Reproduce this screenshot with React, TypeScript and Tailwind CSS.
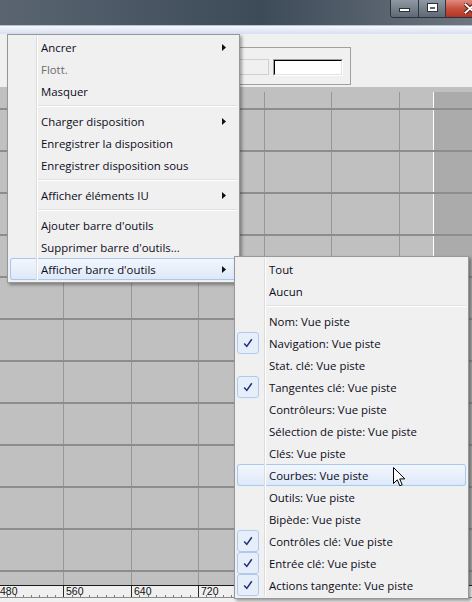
import React from 'react';

type MenuItem =
  | { kind: 'item'; label: string; arrow?: boolean; disabled?: boolean; checked?: boolean; hover?: boolean }
  | { kind: 'sep' };

const mainItems: MenuItem[] = [
  { kind: 'item', label: 'Ancrer', arrow: true },
  { kind: 'item', label: 'Flott.', disabled: true },
  { kind: 'item', label: 'Masquer' },
  { kind: 'sep' },
  { kind: 'item', label: 'Charger disposition', arrow: true },
  { kind: 'item', label: 'Enregistrer la disposition' },
  { kind: 'item', label: 'Enregistrer disposition sous' },
  { kind: 'sep' },
  { kind: 'item', label: 'Afficher éléments IU', arrow: true },
  { kind: 'sep' },
  { kind: 'item', label: "Ajouter barre d'outils" },
  { kind: 'item', label: "Supprimer barre d'outils..." },
  { kind: 'item', label: "Afficher barre d'outils", arrow: true, hover: true },
];

const subItems: MenuItem[] = [
  { kind: 'item', label: 'Tout' },
  { kind: 'item', label: 'Aucun' },
  { kind: 'sep' },
  { kind: 'item', label: 'Nom: Vue piste' },
  { kind: 'item', label: 'Navigation: Vue piste', checked: true },
  { kind: 'item', label: 'Stat. clé: Vue piste' },
  { kind: 'item', label: 'Tangentes clé: Vue piste', checked: true },
  { kind: 'item', label: 'Contrôleurs: Vue piste' },
  { kind: 'item', label: 'Sélection de piste: Vue piste' },
  { kind: 'item', label: 'Clés: Vue piste' },
  { kind: 'item', label: 'Courbes: Vue piste', hover: true },
  { kind: 'item', label: 'Outils: Vue piste' },
  { kind: 'item', label: 'Bipède: Vue piste' },
  { kind: 'item', label: 'Contrôles clé: Vue piste', checked: true },
  { kind: 'item', label: 'Entrée clé: Vue piste', checked: true },
  { kind: 'item', label: 'Actions tangente: Vue piste', checked: true },
];

// row heights of the track view, between the 2px lines
const gridRows = [
  'h-[16px]',
  'h-[40px]', 'h-[40px]', 'h-[40px]', 'h-[40px]', 'h-[40px]', 'h-[40px]',
  'h-[40px]', 'h-[40px]', 'h-[40px]', 'h-[40px]', 'h-[40px]',
  'h-[13px]',
];

// labels hidden under the submenu are left empty
const rulerLabels = ['480', '560', '640', '720', '', '', ''];

function TitleBar() {
  return (
    <div className="h-[25px] shrink-0 pl-[390px] flex bg-linear-to-r from-[#5a6571] via-[#3d4a58] via-55% to-[#6d7680]">
      <div className="flex h-[18px] shrink-0 rounded-bl-[4px] border border-t-0 border-[#28323d] overflow-hidden shadow-[inset_0_0_0_1px_rgba(255,255,255,0.25)]">
        <div className="w-[28px] shrink-0 flex items-end justify-center pb-[5px] bg-linear-to-b from-[#8f99a3] to-[#5e6975] border-r border-[#2e3843]">
          <div className="w-[11px] h-[4px] bg-white border border-[#2a3138]" />
        </div>
        <div className="w-[27px] shrink-0 flex items-start justify-center pt-[3px] bg-linear-to-b from-[#8f99a3] to-[#5e6975] border-r border-[#2e3843]">
          <div className="w-[11px] h-[9px] bg-white border border-[#2a3138] px-[2px] pt-[3px] pb-[2px]">
            <div className="w-full h-full bg-[#5c6670]" />
          </div>
        </div>
        <div className="w-[34px] shrink-0 flex items-start pt-[3px] pl-[18px] bg-linear-to-b from-[#e08a7e] via-[#c8503f] to-[#b03423]">
          <svg width="12" height="11" viewBox="0 0 12 11">
            <path d="M1.5 1.5 L10.5 9.5 M10.5 1.5 L1.5 9.5" stroke="#5a1a12" strokeWidth="4" strokeLinecap="square" />
            <path d="M1.5 1.5 L10.5 9.5 M10.5 1.5 L1.5 9.5" stroke="#ffffff" strokeWidth="2" strokeLinecap="square" />
          </svg>
        </div>
      </div>
    </div>
  );
}

function Toolbar() {
  return (
    <div className="h-[53px] shrink-0 bg-[#f0f0f0] pt-[13px] pl-[180px]">
      <div className="w-[171px] h-[38px] border border-[#a0a0a0] flex justify-end items-start gap-[4px] pt-[11px] pr-[7px]">
        <div className="w-[50px] h-[16px] border border-[#d0d0d0] bg-[#f0f0f0]" />
        <div className="w-[70px] h-[17px] border border-[#a0a0a0] border-r-white border-b-white">
          <div className="h-full bg-white border border-black border-r-[#e3e3e3] border-b-[#e3e3e3]" />
        </div>
      </div>
    </div>
  );
}

function GridRow({ h }: { h: string }) {
  return (
    <div className={`flex shrink-0 ${h}`}>
      <div className="w-[63px] shrink-0" />
      <div className="w-[68px] shrink-0 border-l border-[#979797]" />
      <div className="w-[67px] shrink-0 border-l border-[#979797]" />
      <div className="w-[66px] shrink-0 border-l border-[#979797]" />
      <div className="w-[67px] shrink-0 border-l border-[#979797]" />
      <div className="w-[68px] shrink-0 border-l border-[#979797]" />
      <div className="w-[34px] shrink-0 border-l border-[#979797]" />
      <div className="flex-1 border-l border-white bg-[#ababab]" />
    </div>
  );
}

function TrackGrid() {
  return (
    <div className="h-[498px] shrink-0 flex flex-col bg-[#c0c0c0]">
      <div className="h-[5px] shrink-0" />
      {gridRows.map((h, i) => (
        <React.Fragment key={i}>
          {i > 0 && <div className="h-[2px] shrink-0 bg-[#8d8d8d]" />}
          <GridRow h={h} />
        </React.Fragment>
      ))}
    </div>
  );
}

function RulerCell({ label, w, first }: { label: string; w: string; first?: boolean }) {
  return (
    <div className={`${w} shrink-0 h-full flex flex-col ${first ? '' : 'border-l border-[#2a2a2a]'}`}>
      <span className={`h-[9px] text-[10.5px] leading-[10px] text-[#111] font-['Liberation_Sans',Arial,sans-serif] ${first ? 'pl-0' : 'pl-[2px]'}`}>
        {label}
      </span>
      <div className="mt-auto h-[2px] flex">
        {[0, 1, 2, 3, 4, 5, 6, 7].map((t) => (
          <div key={t} className={`flex-1 ${t < 7 ? 'border-r border-[#7c7c7c]' : ''}`} />
        ))}
      </div>
    </div>
  );
}

function Ruler() {
  const widths = ['w-[63px]', 'w-[68px]', 'w-[67px]', 'w-[66px]', 'w-[67px]', 'w-[68px]', 'w-[67px]'];
  return (
    <div className="h-[17px] shrink-0 flex flex-col bg-[#f0f0f0]">
      <div className="h-px bg-[#1c1c1c]" />
      <div className="h-[11px] flex overflow-hidden">
        {rulerLabels.map((l, i) => (
          <RulerCell key={i} label={l} w={widths[i]} first={i === 0} />
        ))}
      </div>
      <div className="h-px bg-[#8a8a8a]" />
    </div>
  );
}

function CheckBox() {
  return (
    <div className="w-[22px] h-[22px] rounded-[3px] border border-[#afcaee] bg-[#e6eefa] flex items-center justify-center">
      <svg width="10" height="10" viewBox="0 0 10 10">
        <path d="M1.2 5.4 L3.8 8.4 L8.8 1.2" fill="none" stroke="#1d2f78" strokeWidth="1.5" />
      </svg>
    </div>
  );
}

function MenuRow({ item, gutter }: { item: MenuItem; gutter: string }) {
  if (item.kind === 'sep') {
    return (
      <div className="flex h-[8px]">
        <div className={`${gutter} shrink-0 h-full border-r border-[#dcdcdc] shadow-[1px_0_0_#ffffff]`} />
        <div className="flex-1 flex flex-col justify-center pl-px">
          <div className="h-px bg-[#e0e0e0]" />
          <div className="h-px bg-white" />
        </div>
      </div>
    );
  }
  return (
    <div
      className={`flex h-[22px] items-center rounded-[3px] ${
        item.hover
          ? 'bg-linear-to-b from-[#f3f7fd] to-[#dde8f8] shadow-[inset_0_0_0_1px_#a9c8ee]'
          : ''
      }`}
    >
      <div className={`${gutter} shrink-0 h-full border-r border-[#dcdcdc] shadow-[1px_0_0_#ffffff] flex items-center`}>
        {item.checked && <CheckBox />}
      </div>
      <span
        className={`flex-1 pl-[4px] pt-px text-[11.4px] leading-[21px] whitespace-nowrap ${
          item.disabled ? 'text-[#6d6d6d]' : 'text-[#0c0c20]'
        }`}
      >
        {item.label}
      </span>
      {item.arrow && (
        <svg width="4" height="7" viewBox="0 0 4 7" className="mr-[11px] shrink-0">
          <path d="M0 0 L4 3.5 L0 7 Z" fill="#111" />
        </svg>
      )}
    </div>
  );
}

function Menu({ items, width, gutter }: { items: MenuItem[]; width: string; gutter: string }) {
  return (
    <div
      className={`${width} bg-[#f0f0f0] border border-[#979797] pt-px pb-[2px] px-[2px] shadow-[2px_2px_3px_rgba(0,0,0,0.35)] font-['Segoe_UI','Open_Sans',sans-serif]`}
    >
      {items.map((it, i) => (
        <MenuRow key={i} item={it} gutter={gutter} />
      ))}
    </div>
  );
}

function Cursor() {
  return (
    <svg width="13" height="21" viewBox="0 0 13 21">
      <path
        d="M0.5 0.5 L0.5 16.5 L4.3 12.8 L6.8 18.8 L9.2 17.8 L6.7 11.9 L11.8 11.9 Z"
        fill="#ffffff"
        stroke="#000000"
        strokeWidth="1"
        strokeLinejoin="miter"
      />
    </svg>
  );
}

export default function App() {
  return (
    <div className="relative w-[472px] h-[602px] overflow-hidden bg-[#f0f0f0] flex flex-col">
      <TitleBar />
      <div className="h-px shrink-0 bg-[#b8c2cd]" />
      <div className="h-[8px] shrink-0 bg-linear-to-b from-[#f5f7fc] to-[#d8dff0]" />
      <Toolbar />
      <TrackGrid />
      <Ruler />

      {/* context menu */}
      <div className="absolute left-[7px] top-[34px]">
        <Menu items={mainItems} width="w-[233px]" gutter="w-[27px]" />
      </div>

      {/* submenu */}
      <div className="absolute left-[234px] top-[256px]">
        <Menu items={subItems} width="w-[235px]" gutter="w-[28px]" />
      </div>

      {/* mouse pointer */}
      <div className="absolute left-[393px] top-[467px]">
        <Cursor />
      </div>
    </div>
  );
}
